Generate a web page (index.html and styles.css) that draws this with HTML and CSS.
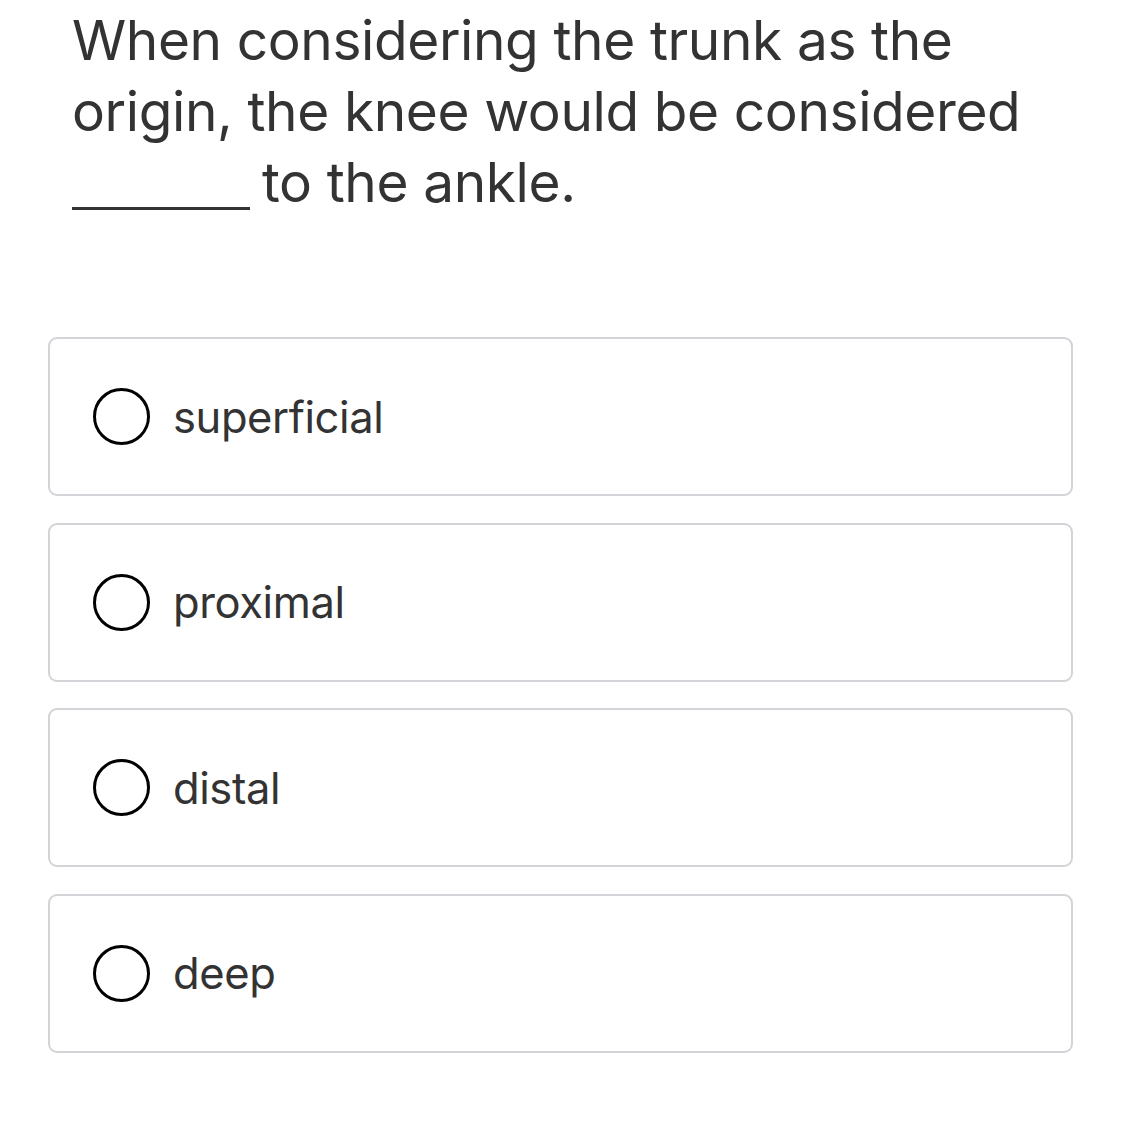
FILE: index.html
```html
<!DOCTYPE html>
<html>
<head>
<meta charset="utf-8">
<link rel="stylesheet" href="styles.css">
</head>
<body>
<div class="page">
  <p class="question">When considering the trunk as the<br>origin, the knee would be considered<br><span class="blank"></span> to the ankle.</p>
  <div class="options">
    <div class="option"><span class="radio"></span><span class="label">superficial</span></div>
    <div class="option"><span class="radio"></span><span class="label">proximal</span></div>
    <div class="option"><span class="radio"></span><span class="label">distal</span></div>
    <div class="option"><span class="radio"></span><span class="label">deep</span></div>
  </div>
</div>
</body>
</html>
```
FILE: styles.css
```css
html, body {
  margin: 0;
  padding: 0;
  background: #fff;
}
.page {
  padding: 0 49px 0 48px;
  font-family: Inter, "Liberation Sans", sans-serif;
  color: #333;
}
.question {
  margin: 0;
  padding: 5px 0 0 24px;
  font-size: 55px;
  line-height: 71px;
  letter-spacing: -0.4px;
  white-space: nowrap;
}
.blank {
  display: inline-block;
  width: 178px;
  height: 3px;
  background: #333;
  vertical-align: -8px;
  margin-right: -3px;
}
.options {
  margin-top: 119px;
  display: flex;
  flex-direction: column;
  gap: 26.6px;
}
.option {
  height: 155px;
  border: 2px solid #d3d3d8;
  border-radius: 9px;
  display: flex;
  align-items: center;
  padding-left: 43px;
  gap: 23px;
}
.radio {
  width: 51px;
  height: 51px;
  border: 3.5px solid #000;
  border-radius: 50%;
  flex: none;
}
.label {
  font-size: 43.5px;
  letter-spacing: -0.4px;
}
```
